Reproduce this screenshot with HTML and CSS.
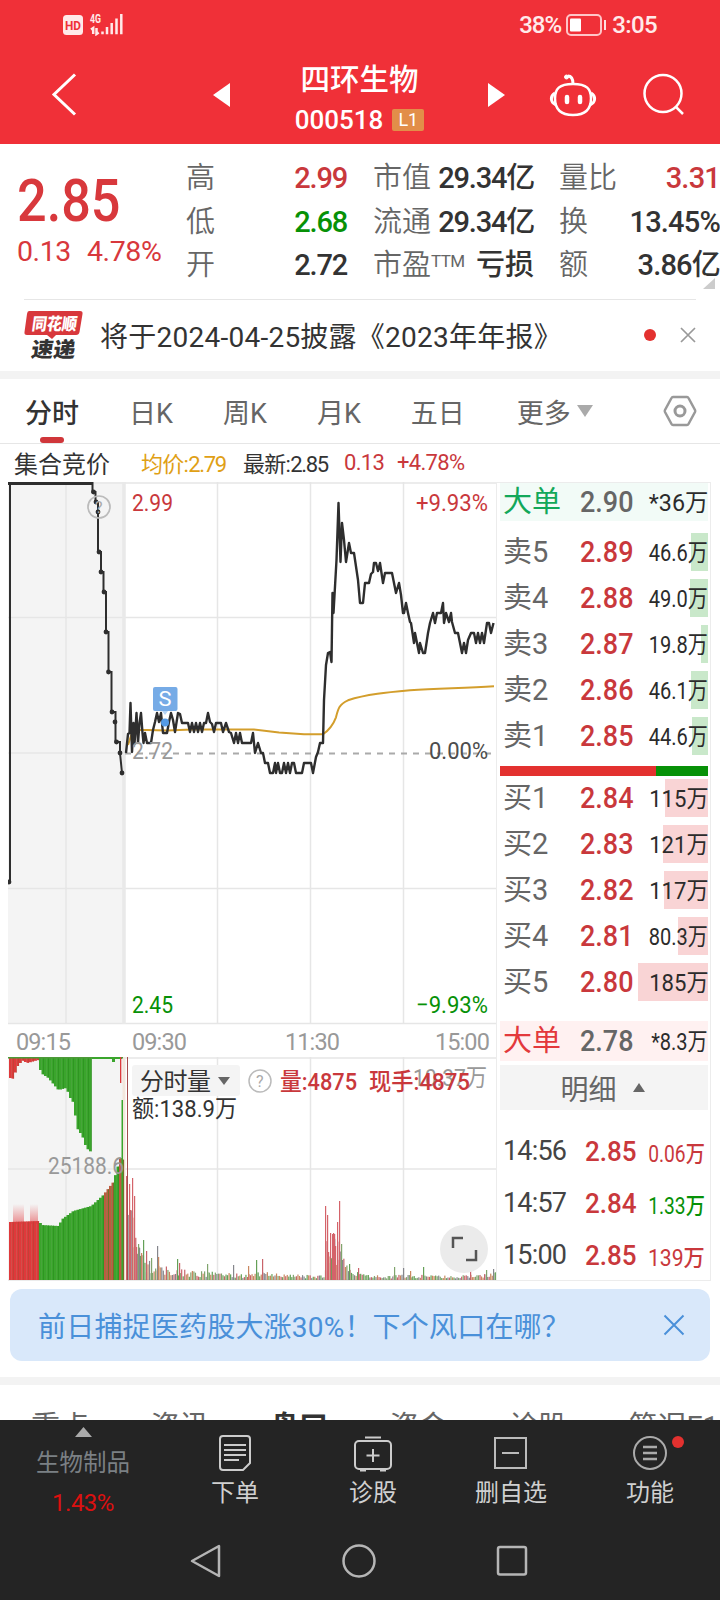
FILE: index.html
```
<!DOCTYPE html>
<html lang="zh-CN">
<head>
<meta charset="utf-8">
<title>四环生物 000518</title>
<link rel="stylesheet" href="styles.css">
</head>
<body>
<div class="phone">
  <header class="header">
    <div class="status">
      <svg class="status-left" width="64" height="24" viewBox="62 12 64 24">
        <rect x="63" y="15" width="20" height="20" rx="3.5" fill="#ffe9e9"/>
        <text x="65" y="30" textLength="16" lengthAdjust="spacingAndGlyphs" font-size="13" font-weight="700" fill="#f03038">HD</text>
        <text x="90" y="22.500" textLength="11" lengthAdjust="spacingAndGlyphs" font-size="12" font-weight="700" fill="#ffe9e9">4G</text>
        <path d="M91 29.500l2.200-1.500v6M96.500 28v6l2.200-1.500M102.500 31.500v2.800M107 27v7.300M111.700 23v11.300M116.500 18.500v15.800M121.300 14v20.300" fill="none" stroke="#ffe9e9" stroke-width="2.500"/>
      </svg>
      <div class="status-right">
        <span class="battery-text">38%</span>
        <svg width="41" height="22" viewBox="0 0 41 22"><rect x="1" y="1" width="34" height="20" rx="4" fill="none" stroke="#ffc5c7" stroke-width="2"/><rect x="4" y="4.500" width="11" height="13" rx="1" fill="#fff"/><path d="M39 6v10" stroke="#ffe0e0" stroke-width="2"/></svg>
        <span class="clock">3:05</span>
      </div>
    </div>
    <div class="titlebar">
      <svg width="28" height="46" viewBox="0 0 28 46"><path d="M25 2.500L4 22.500l21 20" fill="none" stroke="#fff" stroke-width="3"/></svg>
      <svg class="prev" width="18" height="24" viewBox="0 0 18 24"><path d="M17 0v24L0 12z" fill="#fff"/></svg>
      <div class="title">
        <h1>四环生物</h1>
        <div class="code"><span>000518</span><b>L1</b></div>
      </div>
      <svg class="next" width="18" height="24" viewBox="0 0 18 24"><path d="M0 0v24l17-12z" fill="#fff"/></svg>
      <svg class="robot" width="48" height="44" viewBox="0 0 48 44" fill="none" stroke="#fff" stroke-width="2.500"><path d="M24 11c14 0 18 5 18 14.500S38 42 24 42 6 35 6 25.500 10 11 24 11z"/><path d="M6 20c-5 3-5 9 1 12M42 20c5 3 5 9-1 12M24 11c0-6-2-8-5-8" stroke-width="3"/><circle cx="17.500" cy="4" r="2" fill="#fff" stroke-width="1"/><path d="M18 24v5M31 24v5" stroke-width="4.500" stroke-linecap="round"/></svg>
      <svg class="search" width="44" height="44" viewBox="0 0 44 44" fill="none" stroke="#fff" stroke-width="2.500"><circle cx="21" cy="20.500" r="18.500"/><path d="M34 34l7 7"/></svg>
    </div>
  </header>

  <section class="quote">
    <div class="last">
      <div class="last-price"><span>2.85</span></div>
      <div class="last-change"><span>0.13</span><span>4.78%</span></div>
    </div>
    <dl class="stats c1"><dt>高</dt><dd class="up">2.99</dd><dt>低</dt><dd class="down">2.68</dd><dt>开</dt><dd>2.72</dd></dl>
    <dl class="stats c2"><dt>市值</dt><dd>29.34亿</dd><dt>流通</dt><dd>29.34亿</dd><dt>市盈<sup>TTM</sup></dt><dd class="loss">亏损</dd></dl>
    <dl class="stats c3"><dt>量比</dt><dd class="up">3.31</dd><dt>换</dt><dd>13.45%</dd><dt>额</dt><dd>3.86亿</dd></dl>
    <i class="corner"></i>
  </section>

  <section class="news">
    <svg width="60" height="50" viewBox="0 0 60 50">
      <path d="M5 1h51q3 0 2.500 3l-3 18q-.5 3-3.500 3H32l-4 4-5-4H3q-3 0-2.500-3L3 4q.4-3 2-3z" fill="#d8383c"/>
      <g font-weight="900" transform="skewX(-8)"><text x="10" y="20" textLength="45" lengthAdjust="spacingAndGlyphs" font-size="17" fill="#fff">同花顺</text><text x="13" y="47" textLength="44" lengthAdjust="spacingAndGlyphs" font-size="21" fill="#333">速递</text></g>
    </svg>
    <p>将于2024-04-25披露《2023年年报》</p>
    <i class="dot"></i>
    <svg class="close" width="16" height="16" viewBox="0 0 16 16"><path d="M1 1l14 14M15 1L1 15" stroke="#999" stroke-width="1.700"/></svg>
  </section>

  <nav class="tabs">
    <span class="active">分时</span><span>日K</span><span>周K</span><span>月K</span><span>五日</span><span class="more">更多</span>
    <svg class="caret" width="16" height="12" viewBox="0 0 16 12"><path d="M0 0h16L8 12z" fill="#aaa"/></svg>
    <svg class="hex" width="34" height="32" viewBox="0 0 34 32" fill="none" stroke="#999" stroke-width="2.500"><path d="M10 2h14q1 0 1.500 1l6.500 12q.5 1 0 2l-6.500 12q-.5 1-1.500 1H10q-1 0-1.500-1L2 17q-.5-1 0-2L8.500 3Q9 2 10 2z"/><circle cx="17" cy="16" r="5" stroke-width="3"/></svg>
  </nav>

  <div class="legend"><span class="auction">集合竞价</span><span class="avg">均价:<b>2.79</b></span><span class="new">最新:<b>2.85</b></span><span class="up chg">0.13</span><span class="up pct">+4.78%</span></div>

  <main class="board">
    <div class="charts">
      <svg class="price-chart" width="488" height="543" viewBox="8 482 488 543">
        <rect x="8" y="482" width="117" height="542" fill="#f4f4f4"/>
        <path d="M66 482v542M217.500 482v542M310.500 482v542M403.500 482v542M8 483h488M8 617.500h488M8 753h112M8 888.500h488M8 1023.500h488" stroke="#e6e6e6" stroke-width="1.500"/>
        <path d="M124 482v542" stroke="#e9e9e9" stroke-width="3.500"/>
        <path d="M125 753.500h371" stroke="#aaa" stroke-width="2" stroke-dasharray="6 6"/>
        <path d="M128 745l4-12 5-3 10 0 20 .5 25-1h62l25 3 25 1.800h19c7-5 10-9 13-17 2-8 3-13 12-17 18-6 40-8 62-10 30-2 55-2 84-4" fill="none" stroke="#d39e2c" stroke-width="2"/>
        <path d="M10 882V483H92.500V492H95.500V502H98V552H101V572H103.500V592H106V632H108.500V672H111.500V712H115.500V742H120V753L122 773" fill="none" stroke="#2e2e2e" stroke-width="2"/>
        <path d="M8 483h84.500" stroke="#2e2e2e" stroke-width="4"/>
        <g id="auction-dots" fill="#2e2e2e"></g>
        <path fill="none" stroke="#2e2e2e" stroke-width="2.400" stroke-linejoin="round" d="M126 753 128 734 129.500 733 130.500 703 132 752 133.500 723 134.500 744 136.500 713 138 743 139.500 723 141 713 142.500 733 143.500 743 145 733 147 743 149 743 151 743 153 730 155 722 157 713 159 722 161 713 163 733 167 733 169 722 171 713 173 720 175 732 178 713 180 714 182 723 188 723 190 732 192 723 194 732 196 723 198 732 200 723 202 732 204 723 206 723 208 713 210 722 212 724 214 732 216 723 221 723 223 732 226 723 229 732 231 733 234 743 236 733 238 743 240 733 242 743 251 743 253 733 255 753 258 743 261 753 263 753 265 763 268 763 270 773 273 773 275 763 276 773 278 763 280 773 282 773 284 763 286 773 288 763 290 773 292 763 294 763 296 773 299 773 302 773 304 763 311 763 313 773 316 757 318 752 320 743 323 743 324 700 326 665 328 653 330 652 331.500 662 332.500 593 333.500 613 336.500 560 338.500 503 340.500 562 342 523 344 540 346 562 349 543 351 553 354 553 358 580 360 603 363 603 365 583 369 583 371 574 373 572 374 563 376 563 378 571 380 563 383 583 385 573 392 573 396 593 399 583 401 595 403 613 404 613 406 603 408 613 410 622 411 623 414 643 415 633 417 643 419 653 420 643 423 653 425 653 428 633 430 623 433 613 435 623 437 613 441 613 443 603 444 623 446 613 449 622 451 613 452 622 455 633 458 633 460 643 462 653 464 643 466 653 468 640 471 633 474 633 476 643 478 633 480 643 482 633 484 643 487 623 489 623 491 633 493.500 623"/>
        <circle cx="99" cy="507" r="11" fill="none" stroke="#bbb" stroke-width="1.700"/>
        <text x="95" y="513" font-size="16" fill="#aaa">?</text>
        <rect x="153" y="687" width="24.500" height="24" rx="2" fill="#76abe6"/><path d="M162 711h6l-3 4z" fill="#b5d4f5"/><circle cx="165" cy="722.500" r="4" fill="#559be6"/>
        <text x="158.500" y="705.500" font-size="20" fill="#fff" textLength="13" lengthAdjust="spacingAndGlyphs">S</text>
        <g font-size="24" class="chart-label">
          <text x="132" y="511" textLength="41" lengthAdjust="spacingAndGlyphs" fill="#c9383c">2.99</text>
          <text x="416" y="511" textLength="72" lengthAdjust="spacingAndGlyphs" fill="#c9383c">+9.93%</text>
          <text x="132" y="758.500" textLength="41" lengthAdjust="spacingAndGlyphs" fill="#999">2.72</text>
          <text x="429" y="758.500" textLength="59" lengthAdjust="spacingAndGlyphs" fill="#4d4d4d">0.00%</text>
          <text x="132" y="1012.500" textLength="41" lengthAdjust="spacingAndGlyphs" fill="#079107">2.45</text>
          <text x="416" y="1012.500" textLength="72" lengthAdjust="spacingAndGlyphs" fill="#079107">−9.93%</text>
        </g>
      </svg>
      <div class="axis"><span>09:15</span><span>09:30</span><span>11:30</span><span>15:00</span></div>
      <svg class="vol-chart" width="488" height="224" viewBox="8 1057 488 224">
        <defs><linearGradient id="fade" x1="0" y1="0" x2="0" y2="1"><stop offset="0" stop-color="#e03338" stop-opacity="0"/><stop offset="1" stop-color="#e03338" stop-opacity=".55"/></linearGradient></defs>
        <rect x="8" y="1057" width="117" height="223" fill="#f4f4f4"/>
        <path d="M66 1057v223M217.500 1057v223M310.500 1057v223M403.500 1057v223M8 1058h488M8 1169h488M8 1280h488" stroke="#e6e6e6" stroke-width="1.500"/>
        <path d="M124 1057v223" stroke="#f3e6dc" stroke-width="3"/>
        <rect x="13" y="1204" width="11" height="20" fill="url(#fade)"/><rect x="30" y="1204" width="8" height="20" fill="url(#fade)"/>
        <g id="bars"></g>
        <path d="M127.500 1057v223" stroke="#a24c4c" stroke-width="1"/>
        <rect x="132" y="1065" width="108" height="31" rx="3" fill="#f4f4f4"/>
        <text x="140" y="1090" font-size="24" textLength="71" fill="#333">分时量</text><path d="M218 1077h12l-6 8z" fill="#666"/>
        <circle cx="260" cy="1081" r="11" fill="none" stroke="#bbb" stroke-width="1.500"/><text x="256" y="1087" font-size="16" fill="#aaa">?</text>
        <text x="48" y="1174" font-size="24" fill="#999" textLength="76" lengthAdjust="spacingAndGlyphs">25188.6</text>
        <text x="413" y="1086" font-size="24" fill="#999" textLength="74" lengthAdjust="spacingAndGlyphs">10.37万</text>
        <g font-size="24" fill="#c9383c" font-weight="500"><text x="280" y="1090" textLength="77" lengthAdjust="spacingAndGlyphs">量:4875</text><text x="369" y="1090" textLength="101" lengthAdjust="spacingAndGlyphs">现手:4875</text></g>
        <text x="132" y="1117" font-size="24" fill="#333" textLength="105" lengthAdjust="spacingAndGlyphs">额:138.9万</text>
        <circle cx="464" cy="1249" r="24" fill="#ebebeb"/><path d="M453 1248v-10h10M466 1260h10v-10" fill="none" stroke="#555" stroke-width="2.500"/>
      </svg>
    </div>
    <aside class="book">
      <div class="big sell"><span>大单</span><b>2.90</b><em class="large">*36万</em></div>
      <div class="row"><i style="width:17px"></i><span>卖5</span><b>2.89</b><em>46.6万</em></div>
      <div class="row"><i style="width:18px"></i><span>卖4</span><b>2.88</b><em>49.0万</em></div>
      <div class="row"><i style="width:7px"></i><span>卖3</span><b>2.87</b><em>19.8万</em></div>
      <div class="row"><i style="width:17px"></i><span>卖2</span><b>2.86</b><em>46.1万</em></div>
      <div class="row"><i style="width:16px"></i><span>卖1</span><b>2.85</b><em>44.6万</em></div>
      <div class="ratio"><i style="width:75%"></i></div>
      <div class="row buy"><i style="width:43px"></i><span>买1</span><b>2.84</b><em class="whole">115万</em></div>
      <div class="row buy"><i style="width:45px"></i><span>买2</span><b>2.83</b><em class="whole">121万</em></div>
      <div class="row buy"><i style="width:44px"></i><span>买3</span><b>2.82</b><em class="whole">117万</em></div>
      <div class="row buy"><i style="width:30px"></i><span>买4</span><b>2.81</b><em>80.3万</em></div>
      <div class="row buy"><i style="width:70px"></i><span>买5</span><b>2.80</b><em class="whole">185万</em></div>
      <div class="big bid"><span>大单</span><b>2.78</b><em>*8.3万</em></div>
      <div class="detail">明细<svg width="12" height="9" viewBox="0 0 12 9"><path d="M0 9h12L6 0z" fill="#666"/></svg></div>
      <div class="trades">
        <div><span>14:56</span><b>2.85</b><em class="up">0.06万</em></div>
        <div><span>14:57</span><b>2.84</b><em class="down">1.33万</em></div>
        <div><span>15:00</span><b>2.85</b><em class="up whole">139万</em></div>
      </div>
    </aside>
  </main>

  <div class="banner"><span>前日捕捉医药股大涨30%！下个风口在哪？</span><svg width="22" height="22" viewBox="0 0 22 22"><path d="M1.500 1.500l19 19M20.500 1.500l-19 19" stroke="#4a90d9" stroke-width="2"/></svg></div>
  <nav class="subtabs"><span>重点</span><span>资讯</span><span class="on">盘口</span><span>资金</span><span>诊股</span><span>简况F10</span></nav>

  <footer class="footer">
    <div class="actions">
      <div class="sector"><svg width="17" height="10" viewBox="0 0 17 10"><path d="M0 10h17L8.500 0z" fill="#aaa"/></svg><span>生物制品</span><strong>1.43%</strong></div>
      <div class="act"><svg width="44" height="40" viewBox="0 0 44 40" fill="none" stroke="#ccc" stroke-width="2"><path d="M10 3h24q3 0 3 3v24l-7 7H10q-3 0-3-3V6q0-3 3-3z"/><path d="M11 12h22M11 17h22M11 22h22M11 27h15"/></svg>下单</div>
      <div class="act"><svg width="44" height="40" viewBox="0 0 44 40" fill="none" stroke="#ccc" stroke-width="2"><rect x="4" y="8" width="36" height="28" rx="4"/><path d="M14 4.500h16M22 16v13M15.500 22.500h13M9 37.500h6M29 37.500h6"/></svg>诊股</div>
      <div class="act"><svg width="44" height="40" viewBox="0 0 44 40" fill="none" stroke="#bbb" stroke-width="2"><rect x="6" y="5" width="31" height="30"/><path d="M13 20h17"/></svg>删自选</div>
      <div class="act fn"><svg width="44" height="40" viewBox="0 0 44 40" fill="none" stroke="#aaa" stroke-width="2"><circle cx="22" cy="20" r="16"/><path d="M15 14h14M15 20h14M15 26h14" stroke-width="2.500"/></svg>功能<i></i></div>
    </div>
    <div class="sysnav">
      <svg width="34" height="36" viewBox="0 0 34 36"><path d="M30 3v30L3 18z" fill="none" stroke="#b5b5b5" stroke-width="2.500" stroke-linejoin="round"/></svg>
      <svg width="34" height="36" viewBox="0 0 34 36"><circle cx="17" cy="18" r="15.500" fill="none" stroke="#b5b5b5" stroke-width="2.500"/></svg>
      <svg width="34" height="36" viewBox="0 0 34 36"><rect x="3" y="4" width="28" height="27.500" rx="2" fill="none" stroke="#b5b5b5" stroke-width="2.500"/></svg>
    </div>
  </footer>
</div>
<script src="charts.js"></script>
</body>
</html>
```

FILE: styles.css
```
* { box-sizing: border-box; }
body { margin: 0; background: #fff; color: #333; font-family: Roboto, "Noto Sans CJK SC", sans-serif; }
h1, p, dl, dd { margin: 0; }
svg { display: block; flex: none; }
i, em { font-style: normal; }
b { font-weight: 500; }
.phone { width: 720px; height: 1600px; overflow: hidden; display: flex; flex-direction: column; }
.up { color: #c9383c !important; }
.down { color: #079107 !important; }
.chart-label { font-weight: 450; }

.header { height: 144px; flex: none; background: #f03038; color: #fff; }
.status { height: 49px; padding: 0 63px 0 62px; display: flex; justify-content: space-between; align-items: center; }
.status-left { margin-top: -2px; }
.status-right { display: flex; align-items: center; gap: 5px; font-size: 24px; font-weight: 500; color: #ffeaea; }
.battery-text { letter-spacing: -1px; }
.clock { letter-spacing: -.6px; }
.titlebar { height: 95px; padding: 0 34px 0 50px; display: flex; align-items: center; }
.titlebar svg { margin-top: -3px; }
.titlebar .prev { margin-left: 135px; }
.title { width: 260px; text-align: center; padding-top: 9px; }
.title h1 { font-size: 29.5px; line-height: 38px; font-weight: 500; }
.code { height: 42px; display: flex; align-items: center; justify-content: center; gap: 9px; font-size: 26px; font-weight: 500; }
.code b { width: 32px; height: 22px; line-height: 22px; font-size: 18px; font-weight: 400; background: #e28e49; border-radius: 2px; }
.titlebar .robot { margin-left: 43px; }
.titlebar .search { margin-left: 45px; }

.quote { height: 155px; flex: none; position: relative; display: flex; }
.last { width: 187px; flex: none; padding: 24px 0 0 17px; color: #d8383c; }
.last-price { height: 66px; line-height: 66px; font-size: 60px; font-weight: 500; white-space: nowrap; }
.last-price span { display: inline-block; transform: scaleX(.87); transform-origin: left; }
.last-change { display: flex; gap: 16px; font-size: 28.5px; line-height: 36px; letter-spacing: -.4px; }
.stats { display: grid; flex: none; grid-template-columns: 58px 1fr; grid-auto-rows: 43.5px; line-height: 43.5px; padding-top: 13px; font-size: 29px; white-space: nowrap; }
.stats dt { color: #666; font-weight: 350; }
.stats dd { text-align: right; font-weight: 500; letter-spacing: -1.2px; }
.stats .loss { letter-spacing: 0; }
.stats sup { font-size: 17px; line-height: 1; vertical-align: 8px; letter-spacing: -.6px; font-weight: 400; }
.c1 { width: 161px; margin-left: -1px; }
.c2 { width: 161px; margin-left: 26px; }
.c3 { width: 161px; margin-left: 25px; }
.c3 dd { letter-spacing: -.8px; }
.corner { position: absolute; right: 5px; bottom: 10px; width: 12px; height: 11px; background: #ccc; clip-path: polygon(100% 0, 100% 100%, 0 100%); }

.news { height: 72px; flex: none; margin: 0 24px; border-top: 1px solid #e6e6e6; display: flex; align-items: center; padding-bottom: 1px; }
.news p { margin-left: 16px; font-size: 28px; letter-spacing: .25px; white-space: nowrap; }
.dot { width: 12px; height: 12px; border-radius: 50%; background: #e3312f; margin-left: auto; }
.close { margin-left: 24px; }

.tabs { height: 73px; flex: none; border-top: 8px solid #f3f3f3; border-bottom: 1px solid #e6e6e6; display: flex; align-items: center; padding-left: 25px; font-size: 27px; color: #666; white-space: nowrap; }
.tabs span { margin-right: 50px; }
.tabs .active { color: #333; font-weight: 500; position: relative; }
.tabs .active::after { content: ""; position: absolute; left: 15px; top: 45px; width: 24px; height: 6px; border-radius: 3px; background: #d0363a; }
.tabs .more { margin: 0 6px 0 2px; }
.hex { margin-left: auto; margin-right: 23px; }

.legend { height: 38px; flex: none; padding-left: 14px; padding-bottom: 2px; display: flex; align-items: center; font-size: 22px; letter-spacing: -.7px; white-space: nowrap; }
.legend b { font-weight: 450; letter-spacing: -1.3px; }
.legend .auction { font-size: 24px; letter-spacing: 0; width: 127px; }
.avg { color: #e0a015; width: 102px; }
.new { width: 101px; }
.chg { width: 53px; }

.board { height: 799px; flex: none; padding-left: 8px; display: flex; }
.charts { width: 488px; }
.axis { height: 32px; display: flex; font-size: 23.5px; color: #999; line-height: 34px; letter-spacing: -.9px; font-weight: 450; }
.axis span:nth-child(1) { margin-left: 8px; width: 116px; }
.axis span:nth-child(2) { width: 153px; }
.axis span:nth-child(4) { margin-left: auto; margin-right: 7px; }
.book { width: 215px; border: 1px solid #ececec; padding: 0 2px 0 3px; font-size: 29px; }
.book .row, .book .big, .trades > div { height: 46px; display: flex; align-items: center; position: relative; white-space: nowrap; }
.book .row, .book .big { line-height: 38px; }
.book span { width: 80px; flex: none; padding-left: 3px; color: #666; position: relative; }
.book b { width: 50px; flex: none; font-size: 29px; color: #c9383c; transform: scaleX(.93); transform-origin: left; }
.book em { margin-left: auto; font-size: 24px; color: #2b2b2b; position: relative; transform: scaleX(.835); transform-origin: right; padding-top: 2px; }
.book em.whole { transform: scaleX(.92); }
.book em.large { transform: scaleX(.97); }
.row > i { position: absolute; right: 0; top: 4px; height: 38px; background: #c9e8ca; }
.row.buy > i { background: #f9d4d5; }
.book .big { height: 38px; }
.book .sell { background: #f2fbf7; margin-bottom: 8px; }
.book .bid { background: #fff1f1; height: 40px; margin-top: 16px; margin-bottom: 4px; }
.big b { color: #666 !important; }
.book .sell span { color: #12a85a; }
.book .bid span { color: #e3393c; }
.ratio { height: 10px; margin-top: 7px; margin-bottom: -1px; background: #079107; }
.ratio i { display: block; height: 10px; background: #e3312f; }
.detail { height: 45px; background: #f4f4f4; display: flex; justify-content: center; align-items: center; gap: 16px; color: #666; font-size: 28px; padding-right: 3px; }
.trades { padding-top: 15px; }
.trades > div { height: 52px; }
.trades span { font-size: 27px; color: #444; width: 85px; letter-spacing: -.8px; }
.trades b { font-size: 28px; }
.trades em { margin-right: 3px; font-size: 23px; font-weight: 450; }

.banner { height: 72px; flex: none; margin: 8px 10px 16px; background: #d9e8fa; border-radius: 12px; padding: 0 25px 0 28px; display: flex; align-items: center; justify-content: space-between; font-size: 28px; letter-spacing: .2px; color: #4a90d9; white-space: nowrap; }
.subtabs { height: 43px; flex: none; border-top: 8px solid #f3f3f3; padding: 23px 0 0 31px; overflow: hidden; display: flex; gap: 61.5px; font-size: 29px; line-height: 38px; color: #666; white-space: nowrap; }
.subtabs .on { color: #333; font-weight: 700; }

.footer { height: 180px; flex: none; background: #242424; color: #d0d0d0; }
.actions { height: 106px; display: grid; grid-template-columns: 166px 138px 138px 138px 140px; }
.sector { display: flex; flex-direction: column; align-items: center; padding-top: 7px; }
.sector span { font-size: 23.5px; line-height: 34px; margin-top: 9px; color: #7b8084; }
.sector strong { font-size: 24px; line-height: 30px; margin-top: 8px; font-weight: 400; color: #dc1010; letter-spacing: -.5px; }
.act { display: flex; flex-direction: column; align-items: center; padding-top: 13px; font-size: 24px; line-height: 40px; position: relative; }
.fn i { position: absolute; left: 92px; top: 16px; width: 12px; height: 12px; border-radius: 50%; background: #e3312f; }
.sysnav { height: 74px; padding: 17px 191px 0 189px; display: flex; justify-content: space-between; }
```

FILE: charts.js
```
const NS = "http://www.w3.org/2000/svg";
const bars = document.getElementById("bars");
const dots = document.getElementById("auction-dots");

function bar(x, top, bottom, width, color) {
  const r = document.createElementNS(NS, "rect");
  r.setAttribute("x", x);
  r.setAttribute("y", top);
  r.setAttribute("width", width);
  r.setAttribute("height", Math.max(0, bottom - top));
  r.setAttribute("fill", color);
  bars.appendChild(r);
}

// Linear interpolation over [x, y] points
function at(points, x) {
  for (let i = 1; i < points.length; i++) {
    if (x <= points[i][0]) {
      const [x0, y0] = points[i - 1], [x1, y1] = points[i];
      return y0 + (y1 - y0) * (x - x0) / (x1 - x0);
    }
  }
  return points[points.length - 1][1];
}

[[9, 882], [93.5, 492], [96, 502], [98, 512], [99, 552], [101, 572], [104, 592], [106, 632], [108.5, 672],
 [112, 712], [115, 722], [116.5, 742], [120, 753], [122, 773]].forEach(([x, y]) => {
  const c = document.createElementNS(NS, "circle");
  c.setAttribute("cx", x);
  c.setAttribute("cy", y);
  c.setAttribute("r", 2.4);
  dots.appendChild(c);
});

// Call auction: unmatched volume from the top, matched volume from the bottom
const RED = "#df393b", GREEN = "#3aa52c";
const upper = [[9, 1078], [13, 1079], [15, 1066], [18, 1066], [20, 1060], [26, 1063], [37, 1060], [39, 1070], [41, 1074], [47, 1078], [57, 1090], [65, 1088], [69, 1098], [73, 1104], [75, 1127], [81, 1136], [85, 1148], [91, 1153]];
const lower = [[9, 1222], [38, 1221], [40, 1225], [57, 1226], [61, 1219], [72, 1211], [90, 1206], [102, 1195], [112, 1182], [119, 1158], [122, 1160]];
for (let x = 9; x < 122; x += 2.5) {
  const red = x < 38;
  if (x < 91) {
    bar(x, 1057, at(upper, x), 2.6, red ? RED : GREEN);
    bar(x + 2, 1057, at(upper, x), .5, red ? "#a44a36" : "#248519");
  }
  const late = x > 101 && Math.round(x) % 3 !== 0;
  bar(x, at(lower, x), 1280, 2.6, red ? RED : late ? "#bd5a40" : GREEN);
  bar(x + 2, at(lower, x), 1280, .5, red ? "#a44a36" : "#248519");
}
bar(8, 1057, 1058.5, 115, "#4d9a38");
bar(92, 1057, 1059, 30, GREEN);
bar(112, 1057, 1062, 3, GREEN);
bar(120, 1057, 1083, 1.3, RED);
bar(121.5, 1100, 1280, 1.5, GREEN);

// Continuous session: per-minute volume, heights in px
const peaks = { 126: 104, 129: 96, 130: 70, 132: 102, 134: 84, 136: 33, 138: 36, 139: 32, 141: 27, 143: 40, 146: 29, 151: 22, 157: 34, 158: 23, 177: 21, 179: 17, 207: 16, 233: 15, 248: 14, 256: 20, 262: 21, 325: 74, 327: 65, 328: 28, 330: 47, 332: 46, 333: 47, 334: 46, 335: 34, 337: 58, 339: 79, 341: 36, 342: 20, 345: 13, 349: 16, 358: 12, 394: 13, 403: 12, 410: 9, 423: 13, 470: 9, 486: 10, 493: 11 };
const palette = ["#c9636a", "#80a46d", "#85868c", "#c9875f", "#64a057"];
const base = [[126, 60], [133, 62], [136, 32], [145, 20], [165, 12], [185, 9], [220, 7], [250, 5], [260, 8], [280, 6], [295, 5], [318, 4], [324, 5], [326, 38], [340, 40], [344, 14], [365, 7], [380, 4], [410, 5], [440, 4], [465, 5], [496, 7]];
let seed = 7;
for (let x = 126; x < 495; x += 1.53) {
  seed = (seed * 1103 + 12345) % 65536;
  const rnd = seed / 65536;
  const h = Math.max(1, at(base, x) * (.35 + rnd * .8));
  bar(x, 1280 - h, 1280, 1.2, palette[Math.floor(rnd * 977) % 5]);
}
Object.entries(peaks).forEach(([x, h], i) => {
  const n = Number(x);
  const red = n < 137 || (n > 324 && n < 340);
  bar(n, 1280 - h, 1280, 1.2, red ? "#d4636a" : palette[i % 5]);
});
```
